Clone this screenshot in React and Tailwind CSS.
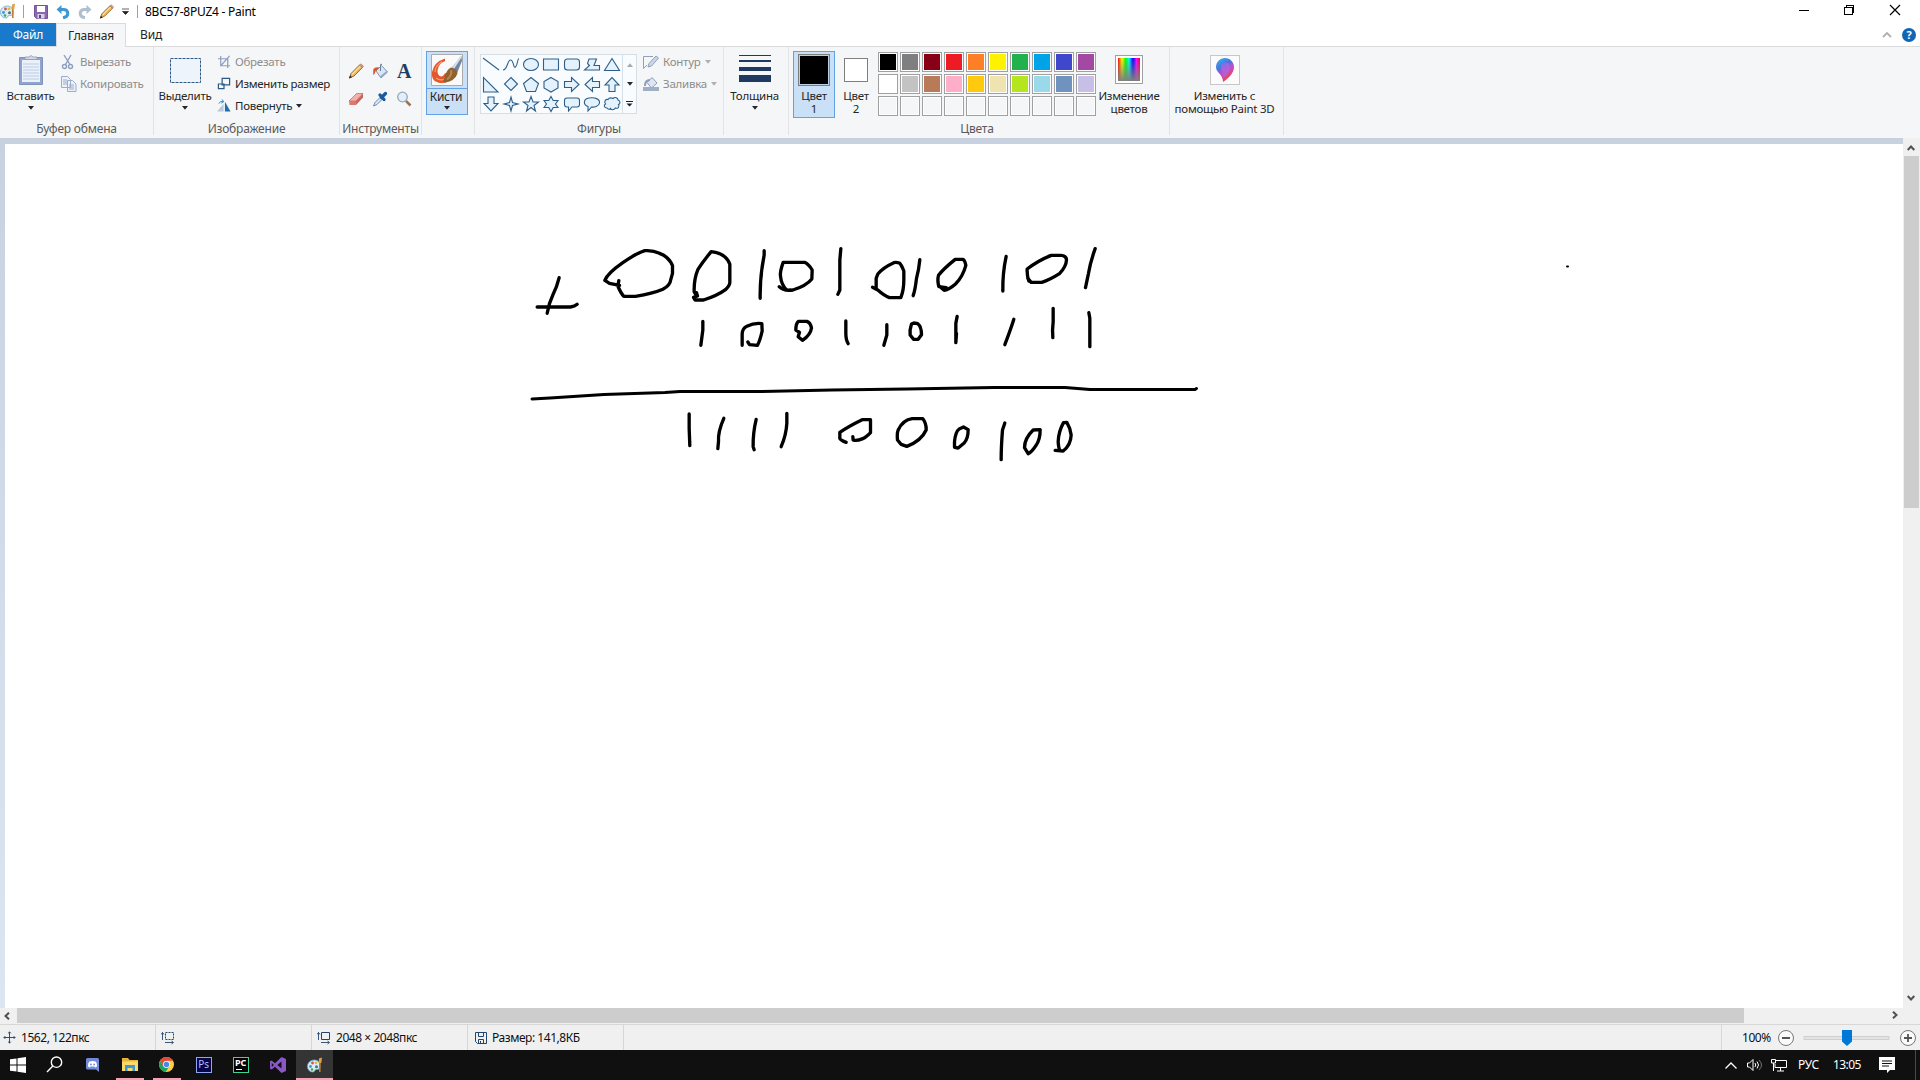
import React from 'react';
import clsx from 'clsx';

const PALETTE = [
    ['bg-black', 'bg-[#7f7f7f]', 'bg-[#880015]', 'bg-[#ed1c24]', 'bg-[#ff7f27]', 'bg-[#fff200]', 'bg-[#22b14c]', 'bg-[#00a2e8]', 'bg-[#3f48cc]', 'bg-[#a349a4]'],
    ['bg-white', 'bg-[#c3c3c3]', 'bg-[#b97a57]', 'bg-[#ffaec9]', 'bg-[#ffc90e]', 'bg-[#efe4b0]', 'bg-[#b5e61d]', 'bg-[#99d9ea]', 'bg-[#7092be]', 'bg-[#c8bfe7]'],
    Array(10).fill('bg-[#f5f6f7]'),
];

const SHAPES = [
    'M2 3L18 15',
    'M2 15C7 14.500 6 5 9.500 5S12 14 14.500 12S16 4 18 3.500',
    'M2.500 9.500a7.500 6 0 1 0 15 0a7.500 6 0 1 0 -15 0',
    'M2.500 4h15v11h-15z',
    'M5.500 4h9q3 0 3 3v5q0 3 -3 3h-9q-3 0 -3 -3v-5q0 -3 3 -3z',
    'M7 4H14.500L12 10.500H17.500V15H2.500L7.500 10.500L5.500 8.500z',
    'M10 3.500L17.500 15.500H2.500z',
    'M2.500 2.500V17H17z',
    'M10 2.500L16.500 9L10 15.500L3.500 9z',
    'M10 2.500L17.500 8.500L14.500 16.500H5.500L2.500 8.500z',
    'M10 2.500L17 6.500V13L10 17L3 13V6.500z',
    'M2.500 6.500H9.500V2.500L17 9.500L9.500 16.500V12.500H2.500z',
    'M17.500 6.500H10.500V2.500L3 9.500L10.500 16.500V12.500H17.500z',
    'M7 16.500V10H3L10 2.500L17 10H13V16.500z',
    'M7 3V9.500H3L10 17L17 9.500H13V3z',
    'M10 3L11.500 8.500L17 10L11.500 11.500L10 17L8.500 11.500L3 10L8.500 8.500z',
    'M10 2.500L12 8H17.500L13 11.500L14.500 17L10 13.500L5.500 17L7 11.500L2.500 8H8z',
    'M10 2.500L12.200 6.500H17L14.500 10L17 13.500H12.200L10 17.500L7.800 13.500H3L5.500 10L3 6.500H7.800z',
    'M5 4H15Q17.500 4 17.500 6.500V10.500Q17.500 13 15 13H10L6.500 17V13H5Q2.500 13 2.500 10.500V6.500Q2.500 4 5 4z',
    'M6 12.500C1 11 1 5 7 4C13 3 18 5 17.500 9C17 12.500 12 13.500 9.500 13L6 17z',
    'M5 14C2 14 1.500 11 3.500 10C1.500 7 4 5 6 5.500C7.500 3 10 4 11 4.500C13 2.500 16 4 16 6C19 7 18 10 16.500 10.500C18 13 15.500 15 13.500 14C12 16.500 9 16 8.500 14.500C7.500 15.500 6 15.500 5 14z',
];

// strokes of the left half of the drawing
const STROKES_LEFT = [
    'M119 143Q112 172 100 195Q88 220 83 250', 'M53 231H153Q166 229 173 223',
    'M298 152L295 168Q304 190 313 199H348Q400 191 430 178Q452 166 454 148L459 130V107Q448 80 420 70Q400 60 376 62Q350 70 310 98Q264 130 256 151L270 160L300 166',
    'M531 188L534 198L522 202L527 210H552Q595 196 619 178Q632 165 631 155V103Q620 70 575 65Q550 95 535 119Q523 148 524 185L531 198',
    'M734 62V75Q721 140 722 205',
    'M779 170Q792 184 820 180Q860 168 877 147L878 120Q868 103 855 97H791Q781 125 783 138Q785 165 803 181L812 180',
    'M550 274V300L544 346', 'M668 346V312Q669 295 682 289Q704 278 727 281L728 303Q722 330 714 346L690 344L685 336',
    'M849 331L836 320L840 307L829 300Q829 280 837 274H862Q873 278 876 294Q873 315 849 331',
    'M509 552V595L511 647', 'M613 565Q595 605 597 635L595 656', 'M710 568Q700 610 701 650L704 659', 'M802 550V580Q800 615 785 650',
];

const STROKES_RIGHT = [
    'M34 56L31 90V180L25 193',
    'M129 172L145 180Q165 198 180 203H214Q223 180 223 150V123Q216 105 210 99Q200 96 193 98Q160 113 145 132L140 145V178',
    'M271 89Q268 120 261 145Q257 180 251 197',
    'M328 167L344 181Q360 178 378 162Q400 140 409 106Q406 90 400 88H377Q340 118 327 136Q323 150 328 170L350 173',
    'M530 79Q519 130 520 183',
    'M598 153Q592 135 593 117Q625 92 665 76H695Q711 78 711 90Q710 110 690 131Q660 150 637 157H605L595 145',
    'M797 56Q782 98 777 130L768 173',
    'M49 273V310Q49 330 56 341', 'M172 284V315L163 346',
    'M246 282Q240 300 242 315L252 328H266L276 314Q276 290 265 281L253 279Z',
    'M383 259L379 280V338L381 310', 'M553 268Q543 300 526 344', 'M671 235V275Q668 300 670 323', 'M778 248L781 265V350',
    'M50 637Q32 630 31 625V607Q55 590 98 569H123V608Q110 622 100 626Q80 634 71 630L70 620',
    'M215 643L204 630Q202 610 206 600Q220 570 248 566H280Q291 580 290 600Q275 633 232 649Z',
    'M375 652V635Q378 605 389 597L402 591L416 599Q416 625 404 639L386 654Z',
    'M526 579L519 600Q515 650 515 689',
    'M596 671L585 653Q585 625 611 600L632 599Q632 630 619 647Q607 666 596 671',
    'M677 661L701 663Q724 645 725 615Q723 595 712 577L702 578Q687 605 686 635Q687 655 692 662',
];

const Caret = ({ className }) => (
    <svg className={clsx('h-[4px] w-[6px] shrink-0', className)} viewBox="0 0 6 4" fill="currentColor">
        <path d="M0 0h6L3.200 3.500h-.4z" />
    </svg>
);

const Pencil = ({ className }) => (
    <svg className={className} viewBox="0 0 16 16">
        <path d="M1.500 15L3 10.500L11.500 2L14.500 4.500L6 13z" fill="#eeb65b" stroke="#8b6238" strokeWidth=".9" />
        <path d="M4 11.500L12.500 3" stroke="#ffe29c" strokeWidth="1.100" />
        <path d="M11.500 2L13 .8L15.600 3.200L14.500 4.500z" fill="#d99a86" stroke="#9a7263" strokeWidth=".5" />
        <path d="M1 15.500L2 12.500L4 14.300z" fill="#222" />
    </svg>
);

const Bucket = ({ className }) => (
    <svg className={className} viewBox="0 0 16 16">
        <path d="M4 8L9.500 2.500L15.500 9L9 15z" fill="#dbe6f3" stroke="#7e93b4" />
        <path d="M8 13.500L14.500 8L15.500 9L9 15z" fill="#8fa8cc" />
        <path d="M8.500 8V2Q8.500 .5 10 1.500" fill="none" stroke="#6b7f9e" />
        <path d="M7.500 4.500Q2 3.500 1.200 7V12Q3 11 3.500 8.500z" fill="#dc5a32" />
    </svg>
);

const PaintLogo = ({ className }) => (
    <svg className={className} viewBox="0 0 16 16">
        <path d="M7.500 3C3 3 .5 6 .5 9.500C.5 13 3 15 6 15C8 15 7.500 12.500 9 12.500C11 12.500 13 12.500 13 9C13 5.500 11 3 7.500 3z" fill="#d9edf7" stroke="#62a9c9" strokeWidth=".8" />
        <circle cx="3.500" cy="9.500" r="1.400" fill="#4b8fdd" />
        <circle cx="5.500" cy="6" r="1.400" fill="#dd5342" />
        <circle cx="9" cy="5.800" r="1.400" fill="#edb52d" />
        <circle cx="5" cy="12.500" r="1.300" fill="#45a64c" />
        <circle cx="9.500" cy="9.700" r="1.500" fill="#4a6f80" />
        <path d="M12.800 6V15" stroke="#c67b2e" strokeWidth="1.600" />
        <path d="M11.500 6L12 1.500L15 .5L14.300 6z" fill="#e3a04b" />
    </svg>
);

const Group = ({ label, className, children }) => (
    <div className={clsx('flex h-[88px] shrink-0 flex-col border-r border-[#e2e3e4]', className)}>
        <div className="flex h-[74px] shrink-0 items-start">{children}</div>
        <div className="text-center text-[12px] leading-[15px] tracking-[-0.2px] text-[#5a5a5a]">{label}</div>
    </div>
);

function TitleBar() {
    return (
        <div className="flex h-[23px] items-center bg-white">
            <PaintLogo className="-mt-[2px] h-4 w-4" />
            <div className="ml-[7px] h-[13px] w-px bg-[#a0a0a0]" />
            <svg className="ml-[10px] h-[14px] w-[14px]" viewBox="0 0 14 14">
                <path d="M.5 .5h13v13h-11l-2-2z" fill="#8968b0" stroke="#75539b" />
                <path d="M3 1h8v6H3z" fill="#fff" />
                <path d="M3.500 9h7v4.500h-7z" fill="#d9d0e6" />
                <path d="M5 10h2v3H5z" fill="#604283" />
            </svg>
            <svg className="ml-[8px] h-[14px] w-[14px]" viewBox="0 0 14 14">
                <path d="M3 4.500H8Q11.800 5 11.800 8.500Q11.500 12 7 12.800" fill="none" stroke="#3e97d3" strokeWidth="3" />
                <path d="M.5 4.500L5.500 0V9z" fill="#3e97d3" />
            </svg>
            <svg className="ml-[8px] h-[14px] w-[14px]" viewBox="0 0 14 14">
                <path d="M11 4.500H6Q2.200 5 2.200 8.500Q2.500 12 7 12.800" fill="none" stroke="#afbfd0" strokeWidth="3" />
                <path d="M13.500 4.500L8.500 0V9z" fill="#afbfd0" />
            </svg>
            <Pencil className="ml-[7px] h-[15px] w-[15px]" />
            <svg className="ml-[8px] h-[7px] w-[7px]" viewBox="0 0 7 7"><path d="M0 1h7M0.500 3.500h6L3.500 6.500z" fill="#222" stroke="#222" strokeWidth=".7" /></svg>
            <div className="ml-[8px] h-[13px] w-px bg-[#a0a0a0]" />
            <span className="ml-[7px] flex-1 tracking-[-0.25px] text-black">8BC57-8PUZ4 - Paint</span>
            <svg className="-mt-[3px] h-[20px] w-[125px]" viewBox="1795 0 125 20" fill="none" stroke="#000" shapeRendering="crispEdges">
                <path d="M1799 10.500h10M1844.500 7.500h8v7h-8zM1846.500 7V5.500h7v7H1853" />
                <path d="M1890 5L1900 15M1900 5L1890 15" shapeRendering="auto" strokeWidth="1.200" />
            </svg>
        </div>
    );
}

function Tabs() {
    return (
        <div className="flex h-[24px] border-b border-[#dadbdc] bg-white leading-[24px]">
            <div className="w-[56px] bg-[#1979ca] text-center text-white">Файл</div>
            <div className="h-[24px] w-[70px] border-x border-t border-[#dadbdc] bg-[#f5f6f7] text-center leading-[23px]">Главная</div>
            <div className="w-[50px] text-center">Вид</div>
            <div className="ml-auto flex items-center gap-[10px] pr-1">
                <svg className="h-[6px] w-[10px]" viewBox="0 0 10 6" fill="none" stroke="#b0b0b0" strokeWidth="1.800"><path d="M1 5L5 1L9 5" /></svg>
                <div className="h-[14px] w-[14px] rounded-full bg-[#1065b5] text-center text-[11px] font-bold leading-[14px] text-white">?</div>
            </div>
        </div>
    );
}

function ClipboardGroup() {
    return (
        <Group label="Буфер обмена" className="w-[154px] pl-0">
            <div className="flex w-[61px] flex-col items-center pt-[7px]">
                <svg className="h-[32px] w-[26px]" viewBox="0 0 26 32">
                    <path d="M1.500 3.500h23v27h-23z" fill="#8fa5cf" stroke="#8093b8" />
                    <path d="M4 6h18v22H4z" fill="#eaf1fb" />
                    <path d="M5 10h16M5 13h16M5 16h16M5 19h16M5 22h16M5 25h16" stroke="#bccbe4" />
                    <path d="M7 5.500V3h4Q13 0 15 3h4v2.500z" fill="#d1d8e4" stroke="#8b99b2" strokeWidth=".8" />
                </svg>
                <span className="mt-[2px] leading-[16px]">Вставить</span>
                <Caret className="mt-[2px]" />
            </div>
            <div className="flex flex-col pt-[4px] text-[#8d8d8d]">
                <div className="flex h-[22px] items-center gap-[3px]">
                    <svg className="h-4 w-4" viewBox="0 0 16 16" fill="none" stroke="#8b9fc0" strokeWidth="1.400">
                        <path d="M3 1L9 10.500M10 1L4.500 10.500" />
                        <circle cx="3.500" cy="12.500" r="2" /><circle cx="9.500" cy="12.500" r="2" />
                    </svg>
                    <span>Вырезать</span>
                </div>
                <div className="flex h-[22px] items-center gap-[3px]">
                    <svg className="h-4 w-4" viewBox="0 0 16 16" fill="#edf2fa" stroke="#9daccb">
                        <path d="M.5 .5h6l3 3v8h-9zM6.500 4.500h5l3.500 3.500v7.500h-8.500z" />
                        <path d="M2 4h4M2 6h4M2 8h4M8 9h5M8 11h5M8 13h5" />
                    </svg>
                    <span className="tracking-[-0.25px]">Копировать</span>
                </div>
            </div>
        </Group>
    );
}

function ImageGroup() {
    return (
        <Group label="Изображение" className="w-[186px]">
            <div className="flex w-[62px] flex-col items-center pt-[11px]">
                <svg className="h-[25px] w-[31px]" viewBox="0 0 31 25"><path d="M.5 .5h30v24h-30z" fill="#eef4fc" stroke="#2e5984" strokeDasharray="3 1" /></svg>
                <span className="mt-[5px] leading-[16px]">Выделить</span>
                <Caret className="mt-[2px]" />
            </div>
            <div className="flex flex-col pl-px pt-[4px]">
                <div className="flex h-[22px] items-center gap-1 text-[#8d8d8d]">
                    <svg className="h-[14px] w-[14px]" viewBox="0 0 15 15" fill="none" stroke="#8b9fc0"><path d="M1 4h10.500v10M4 1v10.500h10M13.500 1L4 11.500" strokeWidth="1.300" /></svg>
                    <span>Обрезать</span>
                </div>
                <div className="flex h-[22px] items-center gap-1">
                    <svg className="h-[14px] w-[14px]" viewBox="0 0 15 15" fill="#f3f8ff" stroke="#2e5984" strokeWidth="1.300"><path d="M5.500 1.500h8v7h-8zM1.500 7.500h6v5h-6z" /></svg>
                    <span className="tracking-[-0.3px]">Изменить размер</span>
                </div>
                <div className="flex h-[22px] items-center gap-1">
                    <svg className="h-[14px] w-[14px]" viewBox="0 0 15 15">
                        <path d="M7 5V13.500H0z" fill="#b9c9db" /><path d="M8.500 3L14.500 13.500H8.500z" fill="#1d6fae" />
                        <path d="M2 5Q3 2 6.500 2.500M5 .5L7.500 2.700L4.500 4.500" fill="none" stroke="#3387c7" />
                    </svg>
                    <span className="tracking-0">Повернуть</span>
                    <Caret />
                </div>
            </div>
        </Group>
    );
}

function ToolsGroup() {
    return (
        <Group label="Инструменты" className="w-[82px]">
            <div className="grid grid-cols-3 gap-x-[8px] gap-y-[12px] pl-[8px] pt-[16px]">
                <Pencil className="h-4 w-4" />
                <Bucket className="h-4 w-4" />
                <span className="text-center font-['Liberation_Serif',serif] text-[20px] font-bold leading-[16px] text-[#1f3e66]">A</span>
                <svg className="h-4 w-4" viewBox="0 0 16 16">
                    <path d="M1 10L8.500 2.500H15L8 10z" fill="#f3b1a8" stroke="#b76a62" strokeWidth=".7" />
                    <path d="M1 10H8V14H1.500z" fill="#dc786d" /><path d="M8 10L15 2.500V6.500L8 14z" fill="#c9655c" />
                </svg>
                <svg className="h-4 w-4" viewBox="0 0 16 16">
                    <path d="M1.500 15L3 11.500L8.500 6L10.500 8L5 13.500z" fill="#d6e6f4" stroke="#6d8eac" />
                    <path d="M8 4L12 8.500M9.500 6.500L13.500 2.500" stroke="#1a5b9c" strokeWidth="3.300" strokeLinecap="round" />
                </svg>
                <svg className="h-4 w-4" viewBox="0 0 16 16">
                    <path d="M10 10L14.500 14.500" stroke="#9a7455" strokeWidth="2.500" />
                    <circle cx="6.500" cy="6" r="4.800" fill="#e0effb" stroke="#9aa7b5" strokeWidth="1.300" />
                </svg>
            </div>
        </Group>
    );
}

function BrushesGroup() {
    return (
        <Group label="" className="w-[53px]">
            <div className="ml-[4px] mt-[4px] flex h-[64px] w-[42px] flex-col items-center border border-[#62a2e4] bg-[#c9e0f7] pt-[2px]">
                <svg className="h-[32px] w-[32px] shrink-0" viewBox="0 0 32 32">
                    <path d="M.5 .5h31v31H.5z" fill="#fafafa" stroke="#a9abad" />
                    <path d="M14 4.500Q3 8 1 18Q0 27 7 28.500Q16 31 22 23L14 19Q12 23.500 8.500 22Q5 19 7.500 13Q9 9 14 7z" fill="#e2572c" />
                    <path d="M11 7.500Q4 12 4 18M5 24Q9 27 14 25" fill="none" stroke="#ff9c74" strokeWidth="1.200" />
                    <path d="M30.500 2L31 7L26.500 18L20.500 14z" fill="#6f87a3" />
                    <path d="M30 2.500L22 14.500" stroke="#d3e0ed" strokeWidth="2.200" />
                    <path d="M20 13.500Q27 15 26.500 19.500Q24 27 14 28.500Q11 28 13.500 24Q15 16 20 13.500z" fill="#8d6230" />
                    <path d="M20 16Q21.500 21 16 25.500" fill="none" stroke="#b98849" strokeWidth="2" />
                </svg>
                <div className="mt-[2px] h-px w-full shrink-0 bg-[#62a2e4]" />
                <span className="-ml-[2px] text-[12px] leading-[15px]">Кисти</span>
                <Caret className="-ml-[1px] mt-[2px]" />
            </div>
        </Group>
    );
}

function ShapesGroup() {
    return (
        <Group label="Фигуры" className="w-[249px]">
            <div className="ml-[5px] mt-[7px] flex h-[60px] w-[157px] border border-[#d5dfe5] bg-[#f8fcff]">
                <div className="grid h-[58px] w-[141px] grid-cols-7 gap-y-[0.5px]">
                    {SHAPES.map((d, i) => (
                        <svg key={i} className="h-[19px] w-[20px]" viewBox="0 0 20 19">
                            <path d={d} fill={i < 2 ? 'none' : '#e3f2fc'} stroke="#2f5f88" strokeWidth="1.100" />
                        </svg>
                    ))}
                </div>
                <div className="flex flex-1 flex-col items-center justify-between border-l border-[#d5dfe5] pb-[6px] pt-[8px]">
                    <Caret className="rotate-180 text-[#a8a8a8]" />
                    <Caret />
                    <svg className="h-[6px] w-[7px]" viewBox="0 0 7 6" fill="#222"><path d="M0 0h7v1H0zM.5 2.500h6L3.500 5.500z" /></svg>
                </div>
            </div>
            <div className="flex flex-col pl-[6px] pt-[4px] text-[#8d8d8d]">
                <div className="flex h-[22px] items-center gap-[4px]">
                    <svg className="h-4 w-4" viewBox="0 0 16 16" fill="none" stroke="#8ea0bd">
                        <path d="M10 2.500H.5V14.500L4 11" /><path d="M5 13L6 9.500L13 2L15.500 4L8.500 12z" fill="#ccd7e8" />
                    </svg>
                    <span>Контур</span>
                    <Caret className="text-[#b0b0b0]" />
                </div>
                <div className="flex h-[22px] items-center gap-[4px]">
                    <svg className="h-4 w-4" viewBox="0 0 16 16">
                        <path d="M0 11h16v4H0z" fill="#a1afc5" />
                        <path d="M4 6.500L9 1.500L14 7L8.500 12z" fill="#dfe6f0" stroke="#8c9dbb" />
                        <path d="M7 4Q2 4 2 10" fill="none" stroke="#8c9dbb" strokeWidth="2" />
                    </svg>
                    <span className="tracking-0">Заливка</span>
                    <Caret className="text-[#b0b0b0]" />
                </div>
            </div>
        </Group>
    );
}

function ColorsGroup() {
    return (
        <Group label="Цвета" className="w-[381px] [&>div:last-child]:pr-[4px]">
            <div className="ml-[4px] mt-[4px] flex h-[67px] w-[42px] flex-col items-center border border-[#62a2e4] bg-[#c9e0f7] pt-[2px]">
                <div className="h-[32px] w-[32px] shrink-0 border border-[#7f7f7f] bg-black shadow-[inset_0_0_0_1px_#b8cfe6]" />
                <span className="mt-[3px] text-center leading-[13px]">Цвет<br />1</span>
            </div>
            <div className="flex w-[42px] flex-col items-center pt-[11px]">
                <div className="h-[24px] w-[24px] border border-[#7f7f7f] bg-white" />
                <span className="mt-[7px] text-center leading-[13px]">Цвет<br />2</span>
            </div>
            <div className="flex flex-col gap-[2px] pl-[1px] pt-[5px]">
                {PALETTE.map((row, i) => (
                    <div key={i} className="flex gap-[2px]">
                        {row.map((color, j) => (
                            <div key={j} className="h-[20px] w-[20px] border border-[#a0a0a0] bg-white p-px">
                                <div className={clsx('h-full w-full', color)} />
                            </div>
                        ))}
                    </div>
                ))}
            </div>
            <div className="flex w-[66px] flex-col items-center pt-[8px]">
                <div className="h-[29px] w-[28px] border border-[#a0a0a0] bg-white p-[2px]">
                    <div className="h-full bg-[linear-gradient(to_right,red,#ff0_18%,lime_35%,cyan_50%,blue_68%,#f0f_84%,red)]">
                        <div className="h-full bg-gradient-to-b from-transparent to-[#808080]" />
                    </div>
                </div>
                <span className="mt-[5px] text-center leading-[13px]">Изменение цветов</span>
            </div>
        </Group>
    );
}

function Ribbon() {
    return (
        <div className="flex h-[91px] bg-[#f5f6f7] text-[11.5px] tracking-[-0.25px]">
            <ClipboardGroup />
            <ImageGroup />
            <ToolsGroup />
            <BrushesGroup />
            <ShapesGroup />
            <Group label="" className="w-[65px]">
                <div className="flex w-full flex-col items-center pr-[3px] pt-[8px]">
                    <svg className="h-[28px] w-[32px]" viewBox="0 0 32 28" fill="#1f3a60"><path d="M0 0h32v1H0zM0 5h32v2H0zM0 12h32v4H0zM0 20h32v7H0z" /></svg>
                    <span className="mt-[5px] leading-[16px]">Толщина</span>
                    <Caret className="mt-[2px]" />
                </div>
            </Group>
            <ColorsGroup />
            <Group label="" className="w-[114px]">
                <div className="flex w-full flex-col items-center pr-[4px] pt-[8px]">
                    <div className="flex h-[30px] w-[30px] items-center justify-center border border-[#c8c8c8] bg-[#fbfbfb]">
                        <svg className="h-[26px] w-[20px]" viewBox="0 0 20 26">
                            <defs>
                                <linearGradient id="drop" x1="0" y1="0" x2=".5" y2="1">
                                    <stop offset="0" stopColor="#28c4ec" /><stop offset=".4" stopColor="#4b74e2" /><stop offset=".65" stopColor="#c04bd0" /><stop offset="1" stopColor="#ee4a3c" />
                                </linearGradient>
                            </defs>
                            <path d="M10 1C5 1 1 5 1 10C1 16 8 17 8 25C14 21 19 16 19 10C19 5 15 1 10 1z" fill="url(#drop)" />
                            <path d="M7 14C3 8 10 3 14 7C17 11 13 17 9 21" fill="#b06be0" opacity=".6" />
                        </svg>
                    </div>
                    <span className="mt-[4px] whitespace-nowrap text-center leading-[13px]">Изменить с<br />помощью Paint 3D</span>
                </div>
            </Group>
        </div>
    );
}

const Chevron = ({ className }) => (
    <svg className={clsx('h-[8px] w-[8px]', className)} viewBox="0 0 8 8" fill="none" stroke="#505050" strokeWidth="2"><path d="M.7 6L4 2.500L7.300 6" /></svg>
);

function Workspace() {
    return (
        <div className="flex h-[870px]">
            <div className="flex-1 bg-gradient-to-b from-[#c8d1e0] to-[#dce6f2] pl-[5px] pt-[6px]">
                <svg className="block h-[864px] w-[1898px] bg-white" viewBox="5 144 1898 864" fill="none" stroke="#000" strokeLinecap="round" strokeLinejoin="round">
                    <g transform="translate(519.500 230) scale(.33333)" strokeWidth="10">
                        {STROKES_LEFT.map((d) => <path key={d} d={d} />)}
                    </g>
                    <g transform="translate(829.500 230) scale(.33333)" strokeWidth="10">
                        {STROKES_RIGHT.map((d) => <path key={d} d={d} />)}
                    </g>
                    <path d="M532 399L550 398L604 394.500L665 392.500L680 391.500H758L832 390L907 389L994 387.500H1065L1090 389.500H1195L1196.500 388.500" strokeWidth="3" />
                    <path d="M1567 266.500h1" strokeWidth="2" />
                </svg>
            </div>
            <div className="flex w-[17px] flex-col items-center bg-[#f0f0f0] pr-px">
                <div className="flex h-[18px] items-center pt-[2px]"><Chevron /></div>
                <div className="h-[352px] w-[15px] bg-[#cdcdcd]" />
                <div className="mt-auto flex h-[20px] items-center"><Chevron className="rotate-180" /></div>
            </div>
        </div>
    );
}

const SizeIcon = ({ dashed }) => (
    <svg className="h-[14px] w-[14px]" viewBox="0 0 14 14" fill="none" stroke="#22456e">
        <path d="M4.500 1.500h8v7h-8z" strokeDasharray={dashed ? '2 1' : undefined} />
        <path d="M1.500 9V1.500M0 3.500L1.500 1.500L3 3.500M4 11.500h8M10.500 10L12.500 11.500L10.500 13" strokeWidth=".9" />
    </svg>
);

function StatusBar() {
    return (
        <div className="flex h-[26px] items-center border-t border-[#d7d7d7] bg-[#f0f0f0] tracking-[-0.45px] text-[#111] [&>div]:h-[25px]">
            <div className="flex w-[156px] items-center gap-[5px] border-r border-[#d7d7d7] pl-[3px]">
                <svg className="h-[13px] w-[13px]" viewBox="0 0 14 14" fill="none" stroke="#22456e"><path d="M7 1v12M1 7h12M5.500 2.500L7 1L8.500 2.500M5.500 11.500L7 13L8.500 11.500M2.500 5.500L1 7L2.500 8.500M11.500 5.500L13 7L11.500 8.500" /></svg>
                <span>1562, 122пкс</span>
            </div>
            <div className="flex w-[156px] items-center border-r border-[#d7d7d7] pl-[5px]"><SizeIcon dashed /></div>
            <div className="flex w-[156px] items-center gap-[5px] border-r border-[#d7d7d7] pl-[5px]"><SizeIcon /><span>2048 × 2048пкс</span></div>
            <div className="flex w-[156px] items-center gap-[5px] border-r border-[#d7d7d7] pl-[7px]">
                <svg className="h-[12px] w-[12px]" viewBox="0 0 12 12" fill="none" stroke="#22456e"><path d="M.5 .5h11v11h-9l-2-2zM3.500 .5v4h5v-4M3.500 11V7.500h5V11M5.500 9v2" /></svg>
                <span>Размер: 141,8КБ</span>
            </div>
            <div className="ml-auto flex w-[199px] items-center border-l border-[#d7d7d7] pl-[20px]">
                <span className="w-[35px]">100%</span>
                <svg className="h-[18px] w-[140px] shrink-0" viewBox="0 0 140 18" fill="none">
                    <path d="M27 7.500h85v3H27z" fill="#e3e3e3" stroke="#cfcfcf" />
                    <path d="M65 1h10v11.500L70 17l-5-4.500z" fill="#0078d7" />
                    <g stroke="#777"><circle cx="9" cy="9" r="7.500" fill="#fafafa" /><circle cx="131" cy="9" r="7.500" fill="#fafafa" /></g>
                    <path d="M5 9h8M127 9h8M131 5v8" stroke="#555" strokeWidth="1.800" />
                </svg>
            </div>
        </div>
    );
}

const Task = ({ className, running, children }) => (
    <div className={clsx('flex h-[30px] w-[37px] flex-col items-center justify-center pt-[1px]', className)}>
        <div className="flex flex-1 items-center">{children}</div>
        <div className={clsx('h-[2px] shrink-0', running)} />
    </div>
);

function Taskbar() {
    return (
        <div className="flex h-[30px] items-center bg-[#101010] text-white">
            <Task className="mr-px pr-px">
                <svg className="h-4 w-4" viewBox="0 0 16 16" fill="#fff"><path d="M0 2.300L6.500 1.400V7.500H0zM7.500 1.200L16 0V7.500H7.500zM0 8.500h6.500v6.100L0 13.700zM7.500 8.500H16V16L7.500 14.800z" /></svg>
            </Task>
            <Task className="pr-[4px]"><svg className="h-[17px] w-[17px]" viewBox="0 0 17 17" fill="none" stroke="#fff" strokeWidth="1.400"><circle cx="10.500" cy="6.200" r="5.200" /><path d="M6.800 10L1 16" /></svg></Task>
            <Task className="-ml-px">
                <svg className="h-[14px] w-[13px]" viewBox="0 0 13 14">
                    <path d="M1.500 0h10Q13 0 13 1.500V14L10 11.500H1.500Q0 11.500 0 10V1.500Q0 0 1.500 0z" fill="#7289da" />
                    <path d="M2 8.500Q2 4.500 3.500 3.500Q6.500 2.700 9.500 3.500Q11 4.500 11 8.500L9 9.500L8.500 8.500H4.500L4 9.500z" fill="#fff" />
                    <circle cx="4.900" cy="6.500" r=".9" fill="#7289da" /><circle cx="8.100" cy="6.500" r=".9" fill="#7289da" />
                </svg>
            </Task>
            <Task running="w-[28px] bg-[#f4a3b4]">
                <svg className="h-[15px] w-[16px]" viewBox="0 0 16 15">
                    <path d="M0 1h6l1.500 2H16v11H0z" fill="#e8b339" /><path d="M0 4.500h16V14H0z" fill="#fbd96c" />
                    <path d="M3 14V8h10v6h-2.500v-3h-5v3z" fill="#3b9ad6" />
                </svg>
            </Task>
            <Task running="w-[28px] bg-[#f4a3b4]">
                <svg className="h-[15px] w-[15px]" viewBox="0 0 16 16">
                    <circle cx="8" cy="8" r="8" fill="#ffcd42" />
                    <path d="M8 8L4.500 10L1.070 4A8 8 0 0 1 14.930 4H8z" fill="#de4b3b" />
                    <path d="M1.070 4A8 8 0 0 0 7 15.930L11 10L8 8L4.600 10z" fill="#1ca15f" />
                    <circle cx="8" cy="8" r="3.700" fill="#fff" /><circle cx="8" cy="8" r="2.900" fill="#4787ed" />
                </svg>
            </Task>
            <Task><div className="h-[16px] w-[16px] border border-[#8fa5f5] bg-[#06064a] text-center text-[10px] leading-[13px] tracking-tight text-[#aebfff]">Ps</div></Task>
            <Task>
                <div className="relative h-[16px] w-[16px] border border-[#3bd495] bg-black text-center text-[9px] font-bold leading-[9px] tracking-tight">
                    PC
                    <div className="absolute bottom-[2px] left-[2px] h-px w-[6px] bg-white" />
                </div>
            </Task>
            <Task><svg className="h-4 w-4" viewBox="0 0 16 16"><path d="M11.500 0L16 2V14L11.500 16L5 9.800L1.700 12.500L0 11.700V4.300L1.700 3.500L5 6.200zM11.500 4.500L7.300 8L11.500 11.500zM1.800 6V10L3.800 8z" fill="#8a57c7" fillRule="evenodd" /></svg></Task>
            <Task className="bg-[#343434]" running="w-full bg-[#f4a3b4]"><PaintLogo className="h-4 w-4" /></Task>

            <div className="ml-auto flex h-full items-center">
                <svg className="h-[7px] w-[12px]" viewBox="0 0 12 7" fill="none" stroke="#fff" strokeWidth="1.300"><path d="M.5 6.500L6 1L11.500 6.500" /></svg>
                <svg className="ml-[10px] h-[14px] w-[16px]" viewBox="0 0 16 14" fill="none" stroke="#fff">
                    <path d="M.5 5h2L6 1.500v11L2.500 9h-2zM8 5q1.500 2 0 4M10 3.500q3 3.500 0 7" /><path d="M12 2q5 5 0 10" stroke="#777" />
                </svg>
                <svg className="ml-[8px] h-[14px] w-[16px]" viewBox="0 0 16 14" fill="none" stroke="#fff"><path d="M5 2.500h10.500v7H4V6M.5 1.500h4v3.500h-4zM2.500 5v8M9.500 10v3M6 13h7" /></svg>
                <span className="ml-[11px] w-[35px]">РУС</span>
                <span className="w-[46px] tracking-[-0.6px]">13:05</span>
                <svg className="h-[16px] w-[16px]" viewBox="0 0 16 16"><path d="M0 0h16v13h-5l-3 3v-3H0z" fill="#fff" /><path d="M3 4h10M3 6.500h10M3 9h7" stroke="#111" /></svg>
                <div className="ml-[20px] mr-[4px] h-full w-px bg-[#4a4a4a]" />
            </div>
        </div>
    );
}

export default function App() {
    return (
        <div className="h-[1080px] w-[1920px] overflow-hidden bg-white font-['Noto_Sans',sans-serif] text-[12px] tracking-[-0.2px] text-[#262626]">
            <TitleBar />
            <Tabs />
            <Ribbon />
            <Workspace />
            <div className="flex h-[16px] items-start bg-[#f0f0f0]">
                <div className="flex h-[15px] w-[17px] items-center pl-[3px]"><Chevron className="-rotate-90" /></div>
                <div className="h-[15px] w-[1727px] bg-[#cdcdcd]" />
                <Chevron className="ml-auto mr-[21px] mt-[3px] rotate-90" />
            </div>
            <StatusBar />
            <Taskbar />
        </div>
    );
}
